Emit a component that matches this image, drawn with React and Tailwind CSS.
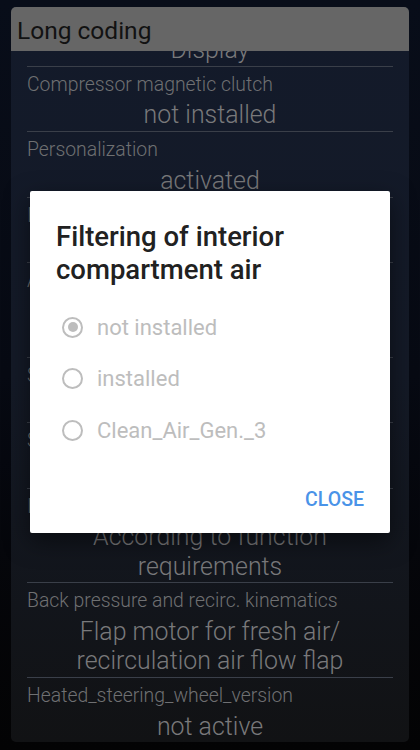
const rows = [
  { label: 'Display', value: 'Display' },
  { label: 'Compressor magnetic clutch', value: 'not installed' },
  { label: 'Personalization', value: 'activated' },
  { label: 'Interior light', value: 'activated' },
  { label: 'Automatic air recirculation', value: 'Air quality sensor with AUC function' },
  { label: 'Solar sensor', value: 'installed' },
  { label: 'Seat heating', value: 'not installed' },
  { label: 'Independent ventilation', value: 'According to function requirements' },
  { label: 'Back pressure and recirc. kinematics', value: 'Flap motor for fresh air/ recirculation air flow flap' },
  { label: 'Heated_steering_wheel_version', value: 'not active' },
];

const options = ['not installed', 'installed', 'Clean_Air_Gen._3'];

function Row({ label, value }) {
  return (
    <div className="border-b border-[#3a3f49] pt-[6px] pb-[1.5px]">
      <div className="text-[19.4px] leading-[24px] font-light text-[#6f7072] whitespace-nowrap">{label}</div>
      <div className="mt-[3.5px] text-center text-[24.9px] leading-[29.4px] font-light text-[#79797b]">{value}</div>
    </div>
  );
}

function Radio({ checked, text }) {
  return (
    <div className="flex items-center h-[51.5px] pl-[32px]">
      <span className="w-[21px] h-[21px] rounded-full border-[2.5px] border-[#bdbdbd] flex items-center justify-center">
        {checked && <span className="w-[10px] h-[10px] rounded-full bg-[#bdbdbd]" />}
      </span>
      <span className="ml-[14px] text-[22px] text-[#bdbdbd]">{text}</span>
    </div>
  );
}

export default function App() {
  return (
    <div className="relative w-[420px] h-[750px] overflow-hidden bg-gradient-to-b from-[#080d19] via-[#070a13] to-[#030304] font-['Roboto',sans-serif]">
      <div className="h-full pt-[7px] pb-[8px] px-[11px] flex flex-col">
        <div className="flex-1 flex flex-col rounded-[5px] overflow-hidden bg-gradient-to-b from-[#131a2a] via-[#141a27] to-[#111214]">
          <div className="h-[44px] shrink-0 bg-[#666666] px-[6px] text-[24.5px] leading-[47px] text-[#121212]">Long coding</div>
          <div className="flex-1 overflow-hidden px-[16px]">
            <div className="-mt-[49.6px]">
              {rows.map((r, i) => <Row key={i} {...r} />)}
            </div>
          </div>
        </div>
      </div>

      <div className="absolute left-[30px] top-[191px] w-[360px] h-[342px] bg-white rounded-[2px] shadow-[0_8px_24px_rgba(0,0,0,0.5)] flex flex-col">
        <div className="pt-[29px] px-[26px] text-[27.5px] leading-[33px] font-medium text-[#212121]">
          Filtering of interior compartment air
        </div>
        <div className="mt-[15.5px]">
          {options.map((o, i) => <Radio key={o} checked={i === 0} text={o} />)}
        </div>
        <div className="flex justify-end mt-[26px] pr-[18px]">
          <button className="h-[36px] px-[8px] text-[19.5px] font-medium text-[#4a93e8]">CLOSE</button>
        </div>
      </div>
    </div>
  );
}
